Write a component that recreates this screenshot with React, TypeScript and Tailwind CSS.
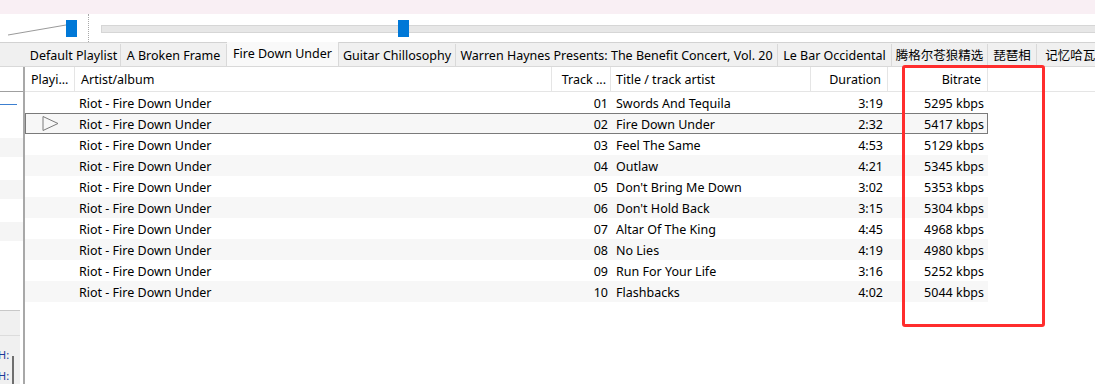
import React from 'react';

const tabs = [
  { label: 'Default Playlist', w: 'w-[94px]' },
  { label: 'A Broken Frame', w: 'w-[106px]' },
  { label: 'Fire Down Under', w: 'w-[112px]', active: true },
  { label: 'Guitar Chillosophy', w: 'w-[117px]' },
  { label: 'Warren Haynes Presents: The Benefit Concert, Vol. 20', w: 'w-[322px]' },
  { label: 'Le Bar Occidental', w: 'w-[114px]' },
  { label: '腾格尔苍狼精选', w: 'w-[96px]' },
  { label: '琵琶相', w: 'w-[49px]' },
  { label: '记忆哈瓦那', w: 'w-[80px]' },
];

const tracks = [
  ['01', 'Swords And Tequila', '3:19', '5295'],
  ['02', 'Fire Down Under', '2:32', '5417'],
  ['03', 'Feel The Same', '4:53', '5129'],
  ['04', 'Outlaw', '4:21', '5345'],
  ['05', "Don't Bring Me Down", '3:02', '5353'],
  ['06', "Don't Hold Back", '3:15', '5304'],
  ['07', 'Altar Of The King', '4:45', '4968'],
  ['08', 'No Lies', '4:19', '4980'],
  ['09', 'Run For Your Life', '3:16', '5252'],
  ['10', 'Flashbacks', '4:02', '5044'],
];

export default function App() {
  return (
    <div
      className="relative w-[1095px] h-[384px] overflow-hidden bg-white text-[12.5px] text-black"
      style={{ fontFamily: '"Noto Sans", "Noto Sans CJK SC", sans-serif' }}
    >
      <div className="h-[14px] bg-[#f9eff4]" />

      {/* toolbar */}
      <div className="h-[29px] flex border-b border-[#d2d2d2]">
        <div className="relative w-[88px] h-full">
          <svg className="absolute left-0 top-0" width="88" height="28">
            <line x1="8" y1="21" x2="66" y2="11" stroke="#9a9a9a" strokeWidth="1" />
          </svg>
          <div className="absolute left-[66px] top-[6px] w-[11px] h-[17px] bg-[#0078d7]" />
        </div>
        <div className="w-[3px] h-full border-l border-dotted border-[#a8a8a8]" />
        <div className="relative flex-1">
          <div className="absolute left-[10px] right-[-10px] top-[11px] h-[8px] bg-[#e7e7e7] border border-[#d6d6d6]" />
          <div className="absolute left-[307px] top-[6px] w-[11px] h-[17px] bg-[#0078d7]" />
        </div>
      </div>

      {/* tabs */}
      <div className="h-[24px] flex items-end bg-[#f0f0f0] pl-[27px] border-b border-[#d9d9d9]">
        {tabs.map((t) => (
          <div
            key={t.label}
            className={
              'shrink-0 flex justify-center whitespace-nowrap overflow-hidden border-r border-[#d9d9d9] ' +
              t.w +
              (t.active ? ' h-[24px] bg-[#f9f9f9] items-start pt-[3px]' : ' h-[22px] items-start pt-[3px]')
            }
          >
            {t.label}
          </div>
        ))}
      </div>

      <div className="flex h-[317px]">
        {/* left panel */}
        <div className="w-[23px] shrink-0 flex flex-col">
          <div className="h-[25px] border-b border-[#a0a0a0]" />
          <div className="h-[13px] border-b border-[#3c7fd0] mr-[6px]" />
          <div className="h-[33px]" />
          <div className="h-[19px] bg-[#f5f5f5]" />
          <div className="h-[23px]" />
          <div className="h-[19px] bg-[#f5f5f5]" />
          <div className="h-[23px]" />
          <div className="h-[19px] bg-[#f5f5f5]" />
          <div className="h-[69px]" />
          <div className="flex-1 border-t border-[#c8c8c8] bg-[#f0f0f0] mr-[3px] relative overflow-hidden">
            <div className="absolute left-0 top-[24px] w-[20px] border-t border-[#dcdcdc]" />
            <div className="absolute left-[-2px] top-[38px] text-[11px] leading-none text-[#1a3a9a]">H:</div>
            <div className="absolute left-[-2px] top-[59px] text-[11px] leading-none text-[#1a3a9a]">H:</div>
            <div className="absolute left-[12px] top-[45px] w-[2px] h-[40px] bg-[#6e6e6e]" />
          </div>
        </div>

        {/* playlist */}
        <div className="flex-1 border-l-2 border-[#a8a8a8] flex flex-col">
          <div className="h-[25px] flex items-center border-b border-[#e5e5e5] shrink-0">
            <div className="w-[50px] shrink-0 pl-[6px] pt-[2px] border-r border-[#e5e5e5] h-full flex items-center">Playi...</div>
            <div className="w-[477px] shrink-0 pl-[6px] pt-[2px] border-r border-[#e5e5e5] h-full flex items-center">Artist/album</div>
            <div className="w-[59px] shrink-0 pr-[4px] pt-[2px] border-r border-[#e5e5e5] h-full flex items-center justify-end">Track ...</div>
            <div className="w-[200px] shrink-0 pl-[5px] pt-[2px] border-r border-[#e5e5e5] h-full flex items-center">Title / track artist</div>
            <div className="w-[77px] shrink-0 pr-[6px] pt-[2px] border-r border-[#e5e5e5] h-full flex items-center justify-end">Duration</div>
            <div className="w-[100px] shrink-0 pr-[6px] pt-[2px] border-r border-[#e5e5e5] h-full flex items-center justify-end">Bitrate</div>
          </div>
          {tracks.map(([n, title, dur, br], i) => (
            <div
              key={n}
              className={
                'h-[21px] w-[963px] flex items-center shrink-0 ' +
                (i % 2 === 1 ? 'bg-[#f7f7f7] ' : '') +
                (i === 1 ? 'border border-[#7a7a7a]' : 'border border-transparent')
              }
            >
              <div className="w-[50px] shrink-0 flex items-center pl-[16px]">
                {i === 1 && (
                  <svg width="17" height="16" viewBox="0 0 17 16">
                    <path d="M1 0.5 L16 7.5 L1 14.5 Z" fill="none" stroke="#7a7a7a" strokeWidth="1" />
                  </svg>
                )}
              </div>
              <div className="w-[477px] shrink-0 pl-[3px] pt-[3px]">Riot - Fire Down Under</div>
              <div className="w-[59px] shrink-0 pr-[4px] pt-[3px] text-right">{n}</div>
              <div className="w-[200px] shrink-0 pl-[4px] pt-[3px]">{title}</div>
              <div className="w-[77px] shrink-0 pr-[6px] pt-[3px] text-right">{dur}</div>
              <div className="w-[100px] shrink-0 pr-[5px] pt-[3px] text-right">{br} kbps</div>
            </div>
          ))}
        </div>
      </div>

      <div className="absolute left-[902px] top-[65px] w-[143px] h-[262px] border-[3px] border-[#ff2d2d] rounded-[3px]" />
    </div>
  );
}
